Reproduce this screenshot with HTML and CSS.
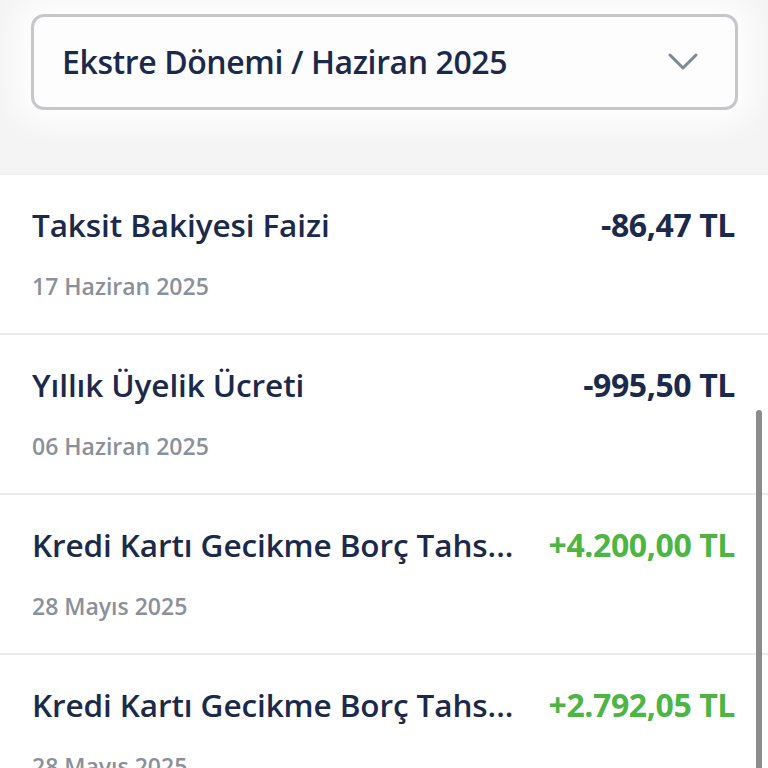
FILE: index.html
```html
<!DOCTYPE html>
<html lang="tr">
<head>
	<title>Ekstre</title>
	<meta charset="UTF-8">
	<link rel="stylesheet" href="styles.css">
</head>
<body>
	<div class="header">
		<div class="period-select">
			<div class="period-text">Ekstre Dönemi / Haziran 2025</div>
			<svg class="chevron" viewBox="0 0 32 20" width="32" height="20">
				<path d="M3 3l13 13L29 3" fill="none" stroke="currentColor" stroke-width="3" stroke-linecap="round" stroke-linejoin="round"/>
			</svg>
		</div>
	</div>

	<div class="list">
		<div class="item">
			<div class="item-row">
				<div class="item-title">Taksit Bakiyesi Faizi</div>
				<div class="amount">-86,47 TL</div>
			</div>
			<div class="item-date">17 Haziran 2025</div>
		</div>
		<div class="item">
			<div class="item-row">
				<div class="item-title">Yıllık Üyelik Ücreti</div>
				<div class="amount">-995,50 TL</div>
			</div>
			<div class="item-date">06 Haziran 2025</div>
		</div>
		<div class="item">
			<div class="item-row">
				<div class="item-title">Kredi Kartı Gecikme Borç Tahs...</div>
				<div class="amount positive">+4.200,00 TL</div>
			</div>
			<div class="item-date">28 Mayıs 2025</div>
		</div>
		<div class="item">
			<div class="item-row">
				<div class="item-title">Kredi Kartı Gecikme Borç Tahs...</div>
				<div class="amount positive">+2.792,05 TL</div>
			</div>
			<div class="item-date">28 Mayıs 2025</div>
		</div>
		<div class="scrollbar"></div>
	</div>
</body>
</html>
```

FILE: styles.css
```css
:root {
	--navy: #1b2a4a;
	--grey-text: #8a919b;
	--green: #4cb543;
	--line: #ebebed;
}

html, body {
	margin: 0;
	padding: 0;
	height: 768px;
	overflow: hidden;
}

body {
	font-family: 'Open Sans', 'Noto Sans', sans-serif;
	background: #fff;
	color: var(--navy);
}

.header {
	height: 175px;
	box-sizing: border-box;
	padding: 14px 30px 0 31px;
	background: #f4f4f5;
	border-bottom: 1px solid #f0f0f1;
}

.period-select {
	height: 96px;
	box-sizing: border-box;
	border: 3px solid #c6c7ca;
	border-radius: 13px;
	background: #fdfdfd;
	box-shadow: 0 0 30px 16px rgba(255,255,255,0.9);
	display: flex;
	align-items: center;
	justify-content: space-between;
	padding: 0 36px 0 28px;
}

.period-text {
	font-size: 32px;
	font-weight: 600;
	letter-spacing: -0.4px;
	padding-bottom: 2px;
}

.chevron {
	color: #7f8896;
	display: block;
}

.list {
	position: relative;
}

.item {
	height: 160px;
	box-sizing: border-box;
	padding: 30px 33px 0 32px;
	border-bottom: 2px solid var(--line);
}

.item-row {
	display: flex;
	justify-content: space-between;
	align-items: center;
	gap: 24px;
}

.item-title {
	font-size: 31.5px;
	font-weight: 600;
	white-space: nowrap;
	line-height: 40px;
	letter-spacing: -0.1px;
}

.amount {
	flex-shrink: 0;
	font-size: 32px;
	font-weight: 700;
	white-space: nowrap;
	line-height: 40px;
	letter-spacing: -0.4px;
}

.amount.positive {
	color: var(--green);
}

.item-date {
	margin-top: 26px;
	font-size: 23px;
	font-weight: 600;
	color: var(--grey-text);
	line-height: 30px;
}

.scrollbar {
	position: absolute;
	right: 6px;
	top: 235px;
	width: 6px;
	height: 360px;
	border-radius: 3px;
	background: #8c8c8c;
}
```
